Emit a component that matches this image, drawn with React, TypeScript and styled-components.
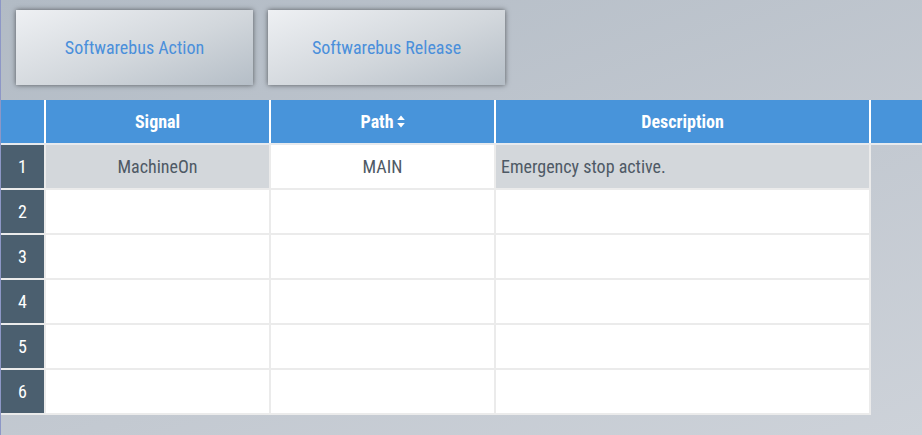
import React from 'react';
import styled, { createGlobalStyle } from 'styled-components';

const GlobalStyle = createGlobalStyle`
  html, body {
    margin: 0;
    padding: 0;
  }
  body {
    font-family: 'Roboto Condensed', 'Roboto', sans-serif;
  }
`;

const Page = styled.div`
  width: 922px;
  height: 435px;
  box-sizing: border-box;
  border-left: 1px solid #8d97c6;
  background: linear-gradient(160deg, #b2bbc5 0%, #c3c9d1 60%, #cdd2d9 100%);
  overflow: hidden;
`;

const Toolbar = styled.div`
  display: flex;
  gap: 15px;
  padding: 10px 0 15px 15px;
`;

const ActionButton = styled.button`
  width: 237px;
  height: 75px;
  border: none;
  padding: 0;
  background: linear-gradient(160deg, #eef0f3 0%, #d2d7dc 55%, #b5bec7 100%);
  box-shadow: 0 0 5px rgba(0, 0, 0, 0.55);
  color: #4a8fdb;
  font-family: inherit;
  font-size: 18px;
  cursor: pointer;
`;

const Header = styled.div`
  display: grid;
  grid-template-columns: 43px 223px 223px 373px 1fr;
  column-gap: 2px;
  background: #ffffff;
  border-bottom: 2px solid #e7eaee;
`;

const HeadCell = styled.div`
  height: 43px;
  display: flex;
  align-items: center;
  justify-content: center;
  gap: 3px;
  background: #4894da;
  color: #ffffff;
  font-weight: bold;
  font-size: 18px;
`;

const Body = styled.div`
  display: grid;
  grid-template-columns: 43px 223px 223px 373px;
  grid-auto-rows: 43px;
  gap: 2px;
  width: 870px;
  box-sizing: border-box;
  padding: 0 2px 2px 0;
  background: #ebebeb;
`;

const RowNum = styled.div`
  display: flex;
  align-items: center;
  justify-content: center;
  background: #4b5f6f;
  color: #ffffff;
  font-size: 18px;
`;

const Cell = styled.div<{ $active?: boolean; $align?: 'left' | 'center' }>`
  display: flex;
  align-items: center;
  justify-content: ${(p) => (p.$align === 'left' ? 'flex-start' : 'center')};
  padding: ${(p) => (p.$align === 'left' ? '0 5px' : '0')};
  background: ${(p) => (p.$active ? '#d3d7db' : '#ffffff')};
  color: #4e5965;
  font-size: 18px;
`;

const SortIcon = () => (
  <svg width="8" height="13" viewBox="0 0 8 13" fill="#ffffff">
    <path d="M4 0.5 L7.8 5 H0.2 Z" />
    <path d="M4 12.5 L7.8 8 H0.2 Z" />
  </svg>
);

type Row = { signal: string; path: string; description: string };

const rows: Row[] = [
  { signal: 'MachineOn', path: 'MAIN', description: 'Emergency stop active.' },
  { signal: '', path: '', description: '' },
  { signal: '', path: '', description: '' },
  { signal: '', path: '', description: '' },
  { signal: '', path: '', description: '' },
  { signal: '', path: '', description: '' },
];

export default function App() {
  return (
    <>
      <GlobalStyle />
      <Page>
        <Toolbar>
          <ActionButton>Softwarebus Action</ActionButton>
          <ActionButton>Softwarebus Release</ActionButton>
        </Toolbar>
        <Header>
          <HeadCell />
          <HeadCell>Signal</HeadCell>
          <HeadCell>
            Path <SortIcon />
          </HeadCell>
          <HeadCell>Description</HeadCell>
          <HeadCell />
        </Header>
        <Body>
          {rows.map((row, i) => (
            <React.Fragment key={i}>
              <RowNum>{i + 1}</RowNum>
              <Cell $active={i === 0}>{row.signal}</Cell>
              <Cell>{row.path}</Cell>
              <Cell $active={i === 0} $align="left">
                {row.description}
              </Cell>
            </React.Fragment>
          ))}
        </Body>
      </Page>
    </>
  );
}
